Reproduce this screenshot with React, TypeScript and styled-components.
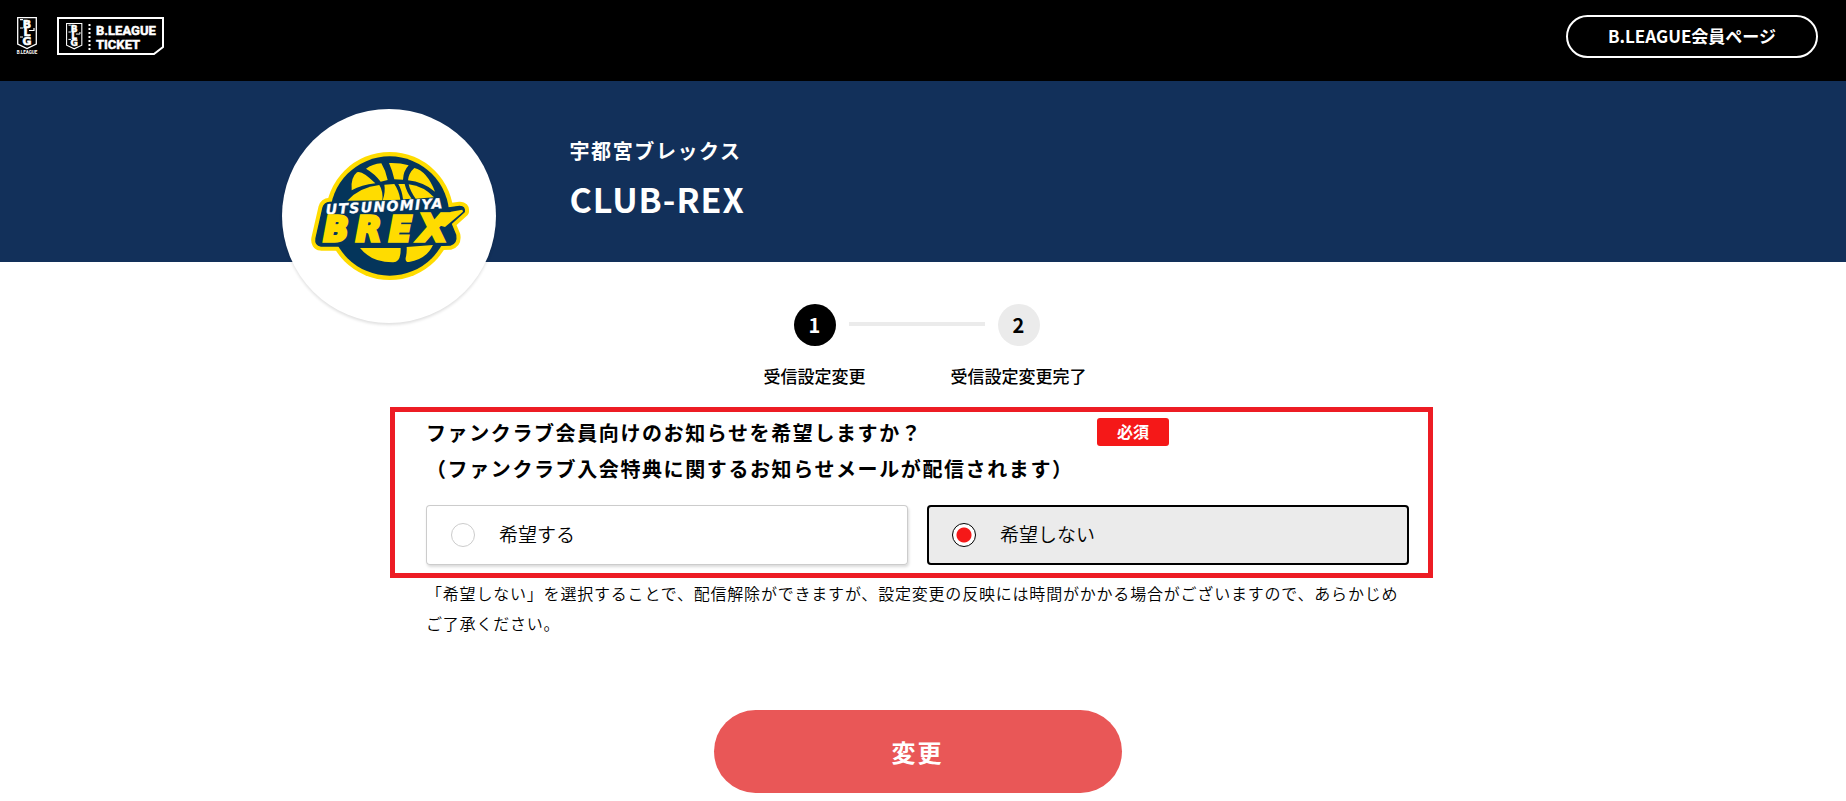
import React, { useState } from "react";
import styled, { createGlobalStyle } from "styled-components";

const GlobalStyle = createGlobalStyle`
  *, *::before, *::after { box-sizing: border-box; }
  body {
    margin: 0;
    background: #fff;
    color: #000;
    font-family: "Noto Sans CJK JP", "Noto Sans", sans-serif;
    font-size: 17px;
  }
  h1, p, ol, fieldset { margin: 0; padding: 0; }
`;

const Header = styled.header`
  display: flex;
  justify-content: space-between;
  align-items: flex-start;
  height: 81px;
  padding: 15px 28px 0 16px;
  background: #000;
`;

const Brands = styled.div`
  display: flex;
  gap: 19px;
  padding-top: 1px;
`;

const BrandLink = styled.a`
  display: block;
  svg { display: block; }
`;

const MemberLink = styled.a`
  display: flex;
  justify-content: center;
  width: 252px;
  height: 43px;
  border: 2px solid #fff;
  border-radius: 22px;
  color: #fff;
  font-weight: 700;
  line-height: 38px;
  text-decoration: none;
`;

const Banner = styled.section`
  height: 181px;
  padding: 28px 11px 0 0;
  background: #12305a;
`;

const BannerInner = styled.div`
  display: flex;
  gap: 74px;
  width: 90%;
  max-width: 1272px;
  margin: 0 auto;
`;

const ClubMark = styled.div`
  display: flex;
  flex: none;
  align-items: center;
  justify-content: center;
  width: 214px;
  height: 214px;
  border-radius: 50%;
  background: #fff;
  box-shadow: 0 2px 3px rgba(0, 0, 0, 0.12);
`;

const ClubText = styled.div`
  padding-top: 28px;
  color: #fff;
  font-weight: 700;
`;

const TeamName = styled.p`
  font-size: 20px;
  line-height: 28px;
  letter-spacing: 0.08em;
`;

const ClubName = styled.h1`
  margin-top: 8px;
  font-size: 34px;
  line-height: 52px;
  letter-spacing: 0.03em;
`;

const Main = styled.main`
  padding: 42px 11px 8px 0;
`;

const Steps = styled.ol`
  display: flex;
  justify-content: center;
  padding-right: 2px;
  list-style: none;
`;

const Step = styled.li`
  position: relative;
  display: flex;
  flex-direction: column;
  align-items: center;
  gap: 18px;
  width: 204px;
  font-weight: 500;
  line-height: 24px;

  & + &::before {
    content: "";
    position: absolute;
    top: 18px;
    left: -68px;
    width: 136px;
    height: 4px;
    background: #ebebeb;
  }
`;

const StepNumber = styled.span<{ $active?: boolean }>`
  display: flex;
  align-items: center;
  justify-content: center;
  width: 42px;
  height: 42px;
  border-radius: 50%;
  background: ${(p) => (p.$active ? "#000" : "#ebebeb")};
  color: ${(p) => (p.$active ? "#fff" : "#000")};
  font-size: 20px;
  font-weight: 700;
`;

const Form = styled.form`
  width: 90%;
  max-width: 983px;
  margin: 19px auto 0;
`;

const Highlight = styled.div`
  margin: 0 -24px 0 -36px;
  padding: 3px 19px 8px 31px;
  border: 5px solid #ed1c24;
`;

const QuestionRow = styled.div`
  display: flex;
  align-items: flex-start;
`;

const Question = styled.p`
  width: 671px;
  font-size: 20px;
  font-weight: 700;
  line-height: 36px;
  letter-spacing: 0.08em;
`;

const Required = styled.span`
  width: 72px;
  margin-top: 3px;
  padding-bottom: 2px;
  border-radius: 3px;
  background: #f51818;
  color: #fff;
  font-size: 16px;
  font-weight: 700;
  line-height: 26px;
  text-align: center;
`;

const Options = styled.div`
  display: flex;
  gap: 19px;
  margin-top: 18px;
`;

const Option = styled.label<{ $checked: boolean }>`
  display: flex;
  flex: 1;
  align-items: center;
  gap: 24px;
  height: 60px;
  padding: 0 25px;
  border-radius: 4px;
  background: ${(p) => (p.$checked ? "#ebebeb" : "#fff")};
  box-shadow: ${(p) =>
    p.$checked
      ? "inset 0 0 0 2px #000"
      : "inset 0 0 0 1px #ccc, 1px 2px 3px rgba(0, 0, 0, 0.15)"};
  font-size: 19px;
  font-weight: 350;
  line-height: 28px;
  cursor: pointer;
`;

const Radio = styled.input`
  appearance: none;
  width: 24px;
  height: 24px;
  margin: 0;
  border: 1px solid #ccc;
  border-radius: 50%;
  background: #fff;

  &:checked {
    border-color: #000;
    background: radial-gradient(circle, #f51818 7px, #fff 8px);
  }
`;

const OptionText = styled.span`
  padding-bottom: 2px;
`;

const Note = styled.p`
  font-size: 16px;
  font-weight: 350;
  line-height: 30px;
  letter-spacing: 0.05em;
`;

const Submit = styled.button`
  display: block;
  width: 408px;
  height: 83px;
  margin: 72px auto 0;
  border: 0;
  border-radius: 42px;
  background: #e95757;
  color: #fff;
  font: inherit;
  font-size: 24px;
  font-weight: 700;
  letter-spacing: 0.08em;
`;

function Shield() {
  return (
    <g>
      <path d="M0.7 0.7H19.3V27L10 31.5L0.7 27Z" fill="none" stroke="#fff" strokeWidth="1.3" />
      <g fill="#fff" stroke="#fff" strokeWidth="0.6" fontFamily="DejaVu Sans" fontWeight="700" fontSize="11" textAnchor="middle">
        <text x="10" y="10.6">B</text>
        <text x="10" y="19.4">L</text>
        <text x="10" y="28.2">G</text>
      </g>
      <path d="M3 2.6H6M3 11H6M12 13.5H17V11M3 20H6" fill="none" stroke="#fff" strokeWidth="1.2" />
    </g>
  );
}

function LeagueLogo() {
  return (
    <svg width="22" height="39" viewBox="0 0 22 39">
      <g transform="translate(1 1)"><Shield /></g>
      <text x="11" y="38" fill="#fff" fontFamily="Roboto" fontWeight="700" fontSize="4.500" textAnchor="middle">
        B.LEAGUE
      </text>
    </svg>
  );
}

function TicketLogo() {
  return (
    <svg width="107" height="39" viewBox="0 0 107 39">
      <path d="M1 2H106V31L97 38H1Z" fill="none" stroke="#fff" strokeWidth="2" />
      <g transform="translate(9 7) scale(0.82)"><Shield /></g>
      <path d="M32.500 8V34" stroke="#fff" strokeWidth="2" strokeDasharray="2 2" />
      <g fill="#fff" stroke="#fff" strokeWidth="0.5" fontFamily="Roboto" fontWeight="700" fontSize="13">
        <text x="39" y="19">B.LEAGUE</text>
        <text x="39" y="33">TICKET</text>
      </g>
    </svg>
  );
}

function BrexLogo() {
  const band =
    "M176 322L505 308Q520 308 522 320L522 340L566 334Q582 334 580 350L540 386L554 420Q558 444 538 450L450 453H150Q132 450 135 430L156 338Q160 323 176 322Z";
  return (
    <svg width="160" height="132" viewBox="114 165 480 396" role="img" aria-label="Utsunomiya Brex">
      <circle cx="356" cy="363" r="192" fill="#ffdc00" />
      <path d={band} fill="#ffdc00" stroke="#ffdc00" strokeWidth="28" strokeLinejoin="round" />
      <circle cx="356" cy="363" r="179" fill="#04355b" />
      <path d={band} fill="#04355b" stroke="#04355b" strokeWidth="4" strokeLinejoin="round" />
      <g fill="#ffdc00">
        <path d="M242 286Q238 248 258 232Q272 224 313 265Q272 270 242 286Z" />
        <path d="M285 221Q304 207 331 205Q345 228 350 255L329 260Q311 236 285 221Z" />
        <path d="M354 204Q387 203 413 211Q397 228 396 254L370 253Q364 226 354 204Z" />
        <path d="M430 219Q468 228 492 290Q457 261 411 256Q413 234 430 219Z" />
        <path d="M229 317Q267 276 325 270Q337 289 334 316Z" />
        <path d="M340 269L370 267Q384 287 388 314L335 316Q344 290 340 269Z" />
        <path d="M382 267L401 267Q407 292 422 311L396 313Q393 286 382 267Z" />
        <path d="M413 268Q459 274 489 307L434 311Q418 290 413 268Z" />
        <path d="M267 459H389Q390 502 367 502Q302 503 267 459Z" />
        <path d="M407 456L486 450Q467 492 414 501Q402 502 404 488Q408 474 407 456Z" />
      </g>
      <g fontFamily="DejaVu Sans" fontWeight="700" fontStyle="italic">
        <text transform="rotate(-3 170 356)" x="165" y="358" fontSize="42" letterSpacing="4" fill="#fff" stroke="#fff">UTSUNOMIYA</text>
        <g fill="#ffdc00" stroke="#ffdc00" strokeWidth="10" textAnchor="middle">
          <text x="195" y="439" fontSize="99">B</text>
          <text x="293" y="439" fontSize="99">R</text>
          <text x="388" y="439" fontSize="99">E</text>
          <text x="486" y="437" fontSize="112">X</text>
        </g>
        <path d="M500 390L540 350L574 344L576 350L522 396Z" fill="#ffdc00" />
      </g>
    </svg>
  );
}

const choices = ["希望する", "希望しない"];

export default function App() {
  const [choice, setChoice] = useState(choices[1]);

  return (
    <>
      <GlobalStyle />
      <Header>
        <Brands>
          <BrandLink href="#league" aria-label="B.LEAGUE"><LeagueLogo /></BrandLink>
          <BrandLink href="#ticket" aria-label="B.LEAGUE TICKET"><TicketLogo /></BrandLink>
        </Brands>
        <MemberLink href="#member">B.LEAGUE会員ページ</MemberLink>
      </Header>
      <Banner>
        <BannerInner>
          <ClubMark><BrexLogo /></ClubMark>
          <ClubText>
            <TeamName>宇都宮ブレックス</TeamName>
            <ClubName>CLUB-REX</ClubName>
          </ClubText>
        </BannerInner>
      </Banner>
      <Main>
        <Steps>
          <Step><StepNumber $active>1</StepNumber>受信設定変更</Step>
          <Step><StepNumber>2</StepNumber>受信設定変更完了</Step>
        </Steps>
        <Form onSubmit={(e) => e.preventDefault()}>
          <Highlight role="radiogroup" aria-labelledby="question">
            <QuestionRow>
              <Question id="question">
                ファンクラブ会員向けのお知らせを希望しますか？<br />
                （ファンクラブ入会特典に関するお知らせメールが配信されます）
              </Question>
              <Required>必須</Required>
            </QuestionRow>
            <Options>
              {choices.map((c) => (
                <Option key={c} $checked={choice === c}>
                  <Radio type="radio" name="news" value={c} checked={choice === c} onChange={() => setChoice(c)} />
                  <OptionText>{c}</OptionText>
                </Option>
              ))}
            </Options>
          </Highlight>
          <Note>
            「希望しない」を選択することで、配信解除ができますが、設定変更の反映には時間がかかる場合がございますので、あらかじめご了承ください。
          </Note>
          <Submit type="submit">変更</Submit>
        </Form>
      </Main>
    </>
  );
}
